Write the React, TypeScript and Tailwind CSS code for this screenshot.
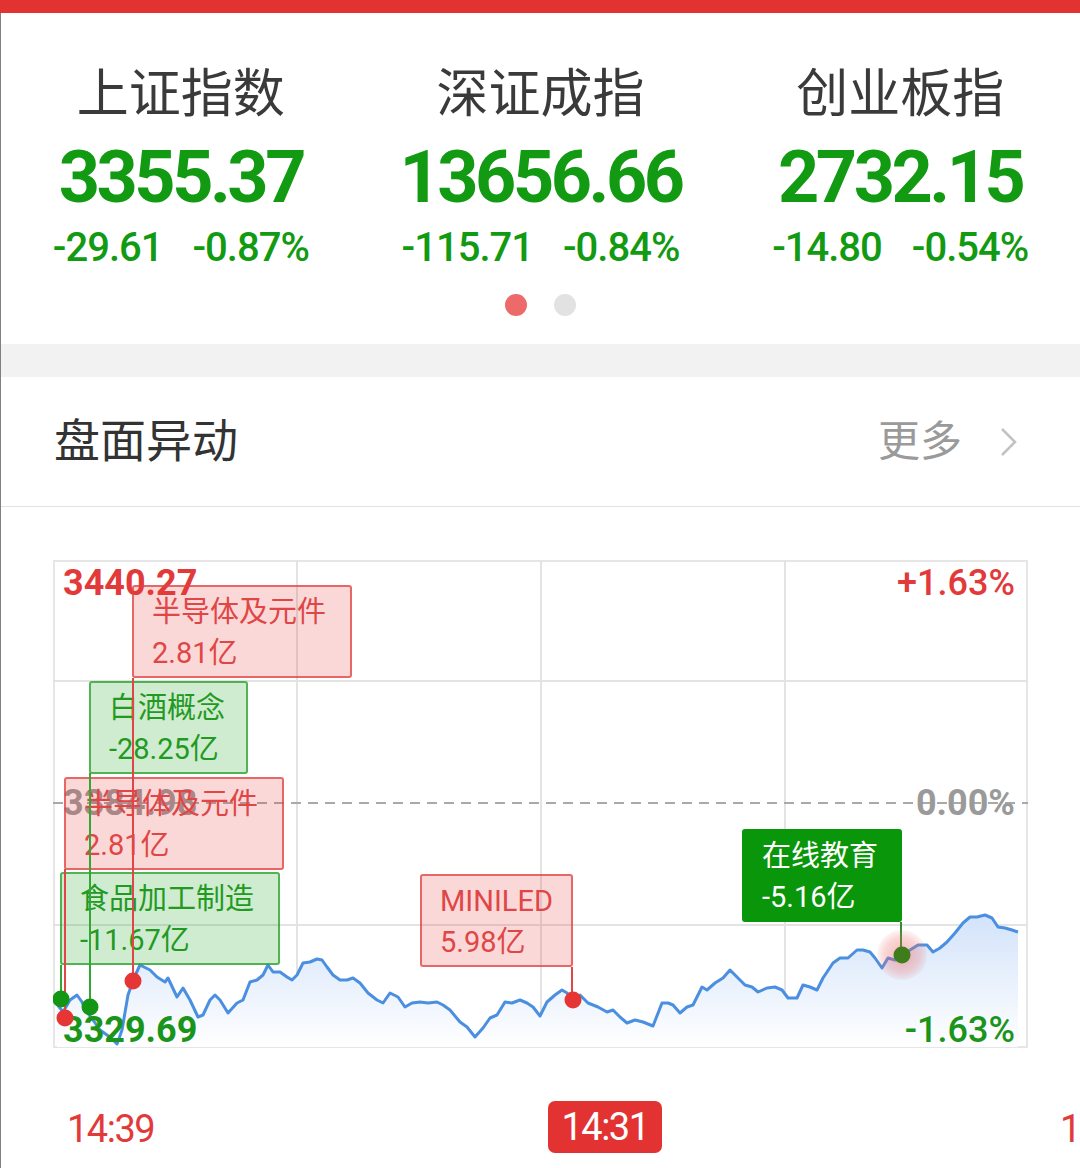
import React from "react";

const linePts: [number, number][] = [
  [57,1004],[63,1012],[70,1000],[77,995],[82,1002],[87,1012],[93,1020],[100,1030],[107,1035],[113,1040],[117,1044],[122,1030],[128,995],[134,978],[140,965],[150,970],[157,977],[165,982],[168,978],[177,997],[183,988],[190,1000],[198,1017],[203,1015],[210,1000],[215,995],[220,1000],[228,1013],[237,1003],[243,1000],[250,982],[257,980],[263,975],[268,965],[273,972],[280,972],[287,977],[292,980],[297,975],[303,963],[310,962],[317,959],[322,960],[327,967],[333,975],[340,980],[347,980],[353,978],[360,983],[368,993],[377,1000],[383,1003],[390,993],[398,997],[405,1007],[412,1003],[420,1002],[428,1003],[437,1002],[443,1005],[450,1010],[460,1022],[467,1027],[475,1037],[483,1028],[490,1018],[497,1015],[505,1002],[512,1003],[520,1000],[527,1003],[533,1007],[540,1016],[547,1002],[555,995],[562,990],[567,993],[573,1000],[580,995],[588,1003],[598,1007],[607,1012],[613,1010],[620,1017],[627,1023],[635,1020],[643,1022],[653,1026],[662,1003],[668,1003],[673,1005],[680,1013],[687,1007],[693,1005],[702,987],[707,990],[715,983],[723,978],[730,970],[737,977],[745,985],[752,987],[758,992],[767,988],[775,987],[782,990],[788,998],[797,998],[803,985],[810,987],[817,990],[823,978],[833,963],[840,958],[848,958],[857,950],[863,950],[870,952],[875,958],[882,968],[888,958],[895,960],[902,955],[910,950],[918,945],[927,945],[933,952],[940,948],[947,942],[955,933],[963,923],[970,917],[977,917],[985,915],[992,918],[998,927],[1005,928],[1012,930],[1018,932],
];

const lineStr = linePts.map((p) => p.join(",")).join(" ");
const fillStr = `${lineStr} 1018,1047 57,1047`;

function IndexCol({ name, value, chg, pct }: { name: string; value: string; chg: string; pct: string }) {
  return (
    <div className="flex flex-col items-center">
      <div className="h-[56px] leading-[56px] text-[52px] text-[#3a3a3a]">{name}</div>
      <div className="mt-[15px] h-[80px] leading-[80px] text-[72px] font-bold tracking-[-3.5px] text-[#129a12]">{value}</div>
      <div className="mt-[6px] h-[48px] leading-[48px] flex gap-[30px] text-[40px] font-medium tracking-[-1px] text-[#129a12]">
        <span>{chg}</span>
        <span>{pct}</span>
      </div>
    </div>
  );
}

function Box({
  left, top, w, title, amount, kind,
}: { left: number; top: number; w: number; title: string; amount: string; kind: "red" | "green" | "solid" }) {
  const cls =
    kind === "red"
      ? "bg-[rgba(232,60,60,0.2)] border-[rgba(224,64,64,0.75)] text-[#e04646]"
      : kind === "green"
      ? "bg-[rgba(40,170,40,0.22)] border-[rgba(40,160,40,0.75)] text-[#229a22]"
      : "bg-[#0a960a] border-[#0a960a] text-white";
  return (
    <div
      className={`absolute h-[93px] rounded-[3px] border-2 pl-[18px] pt-[5px] text-[29px] leading-[41px] whitespace-nowrap ${cls}`}
      style={{ left: left - 53, top: top - 560, width: w }}
    >
      <div>{title}</div>
      <div>{amount}</div>
    </div>
  );
}

export default function App() {
  return (
    <div className="w-[1080px] h-[1168px] overflow-hidden bg-white flex flex-col font-['Roboto','Noto_Sans_CJK_SC',sans-serif]">
      <div className="h-[13px] shrink-0 bg-[#e33232]" />
      <div className="flex-1 flex flex-col border-l border-[#808080]">
        {/* indices */}
        <div className="pt-[54px] pb-[28px]">
          <div className="grid grid-cols-3">
            <IndexCol name="上证指数" value="3355.37" chg="-29.61" pct="-0.87%" />
            <IndexCol name="深证成指" value="13656.66" chg="-115.71" pct="-0.84%" />
            <IndexCol name="创业板指" value="2732.15" chg="-14.80" pct="-0.54%" />
          </div>
          <div className="mt-[22px] flex justify-center gap-[27px]">
            <div className="w-[22px] h-[22px] rounded-full bg-[#ee6a6a]" />
            <div className="w-[22px] h-[22px] rounded-full bg-[#e2e2e2]" />
          </div>
        </div>
        <div className="h-[33px] shrink-0 bg-[#f2f2f2]" />

        {/* header */}
        <div className="h-[130px] shrink-0 flex items-center justify-between pl-[53px] pr-[62px] border-b border-[#e2e2e2]">
          <div className="text-[46px] text-[#333333]">盘面异动</div>
          <div className="flex items-center gap-[38px]">
            <span className="text-[42px] text-[#9a9a9a]">更多</span>
            <svg width="18" height="30" viewBox="0 0 18 30">
              <path d="M2 2 L15 15 L2 28" fill="none" stroke="#c2c2c2" strokeWidth="2.5" />
            </svg>
          </div>
        </div>

        {/* chart */}
        <div className="relative mt-[53px] ml-[52px] w-[975px] h-[488px] shrink-0">
          <svg className="absolute inset-0" width="975" height="488" viewBox="53 560 975 488">
            <defs>
              <linearGradient id="fillg" x1="0" y1="915" x2="0" y2="1048" gradientUnits="userSpaceOnUse">
                <stop offset="0" stopColor="#d3e3fa" />
                <stop offset="1" stopColor="#ffffff" />
              </linearGradient>
              <radialGradient id="halo">
                <stop offset="0" stopColor="rgba(236,90,90,0.45)" />
                <stop offset="0.7" stopColor="rgba(236,110,110,0.28)" />
                <stop offset="1" stopColor="rgba(236,120,120,0.08)" />
              </radialGradient>
            </defs>
            <rect x="54" y="561" width="973" height="486" fill="none" stroke="#e6e6e6" strokeWidth="2" />
            <line x1="297" y1="560" x2="297" y2="1048" stroke="#e3e3e3" strokeWidth="2" />
            <line x1="541" y1="560" x2="541" y2="1048" stroke="#e3e3e3" strokeWidth="2" />
            <line x1="785" y1="560" x2="785" y2="1048" stroke="#e3e3e3" strokeWidth="2" />
            <line x1="53" y1="681" x2="1028" y2="681" stroke="#e3e3e3" strokeWidth="2" />
            <line x1="53" y1="925" x2="1028" y2="925" stroke="#e3e3e3" strokeWidth="2" />
            <polygon points={fillStr} fill="url(#fillg)" />
            <line x1="53" y1="803" x2="1028" y2="803" stroke="#a9a9a9" strokeWidth="2" strokeDasharray="10 7" />
            <polyline points={lineStr} fill="none" stroke="#4a8fe0" strokeWidth="3" strokeLinejoin="round" />
          </svg>

          {/* axis labels */}
          <div className="absolute left-[10px] top-[3px] h-[40px] leading-[40px] text-[36px] font-bold text-[#e23a3a]">3440.27</div>
          <div className="absolute right-[13px] top-[3px] h-[40px] leading-[40px] text-[36px] font-medium text-[#e23a3a]">+1.63%</div>
          <div className="absolute left-[10px] top-[223px] h-[40px] leading-[40px] text-[36px] font-bold text-[#9a9a9a]">3384.98</div>
          <div className="absolute right-[13px] top-[223px] h-[40px] leading-[40px] text-[36px] font-bold text-[#9a9a9a]">0.00%</div>
          <div className="absolute left-[10px] top-[450px] h-[40px] leading-[40px] text-[36px] font-bold text-[#1a951a]">3329.69</div>
          <div className="absolute right-[13px] top-[450px] h-[40px] leading-[40px] text-[36px] font-medium text-[#1a951a]">-1.63%</div>

          {/* annotation boxes */}
          <Box left={132} top={585} w={220} title="半导体及元件" amount="2.81亿" kind="red" />
          <Box left={89} top={681} w={159} title="白酒概念" amount="-28.25亿" kind="green" />
          <Box left={64} top={777} w={220} title="半导体及元件" amount="2.81亿" kind="red" />
          <Box left={60} top={872} w={220} title="食品加工制造" amount="-11.67亿" kind="green" />
          <Box left={420} top={874} w={153} title="MINILED" amount="5.98亿" kind="red" />
          <Box left={742} top={829} w={160} title="在线教育" amount="-5.16亿" kind="solid" />

          {/* connectors and dots */}
          <svg className="absolute inset-0 pointer-events-none" width="975" height="488" viewBox="53 560 975 488">
            <line x1="133" y1="678" x2="133" y2="981" stroke="#e04646" strokeWidth="2" />
            <line x1="90" y1="773" x2="90" y2="1007" stroke="#34a634" strokeWidth="2" />
            <line x1="65" y1="869" x2="65" y2="1018" stroke="#e04646" strokeWidth="2" />
            <line x1="61" y1="965" x2="61" y2="999" stroke="#34a634" strokeWidth="2" />
            <line x1="572" y1="967" x2="572" y2="1000" stroke="#e04646" strokeWidth="2" />
            <line x1="901" y1="922" x2="901" y2="955" stroke="#2d8f2d" strokeWidth="2" />
            <circle cx="902" cy="955" r="25" fill="url(#halo)" />
            <circle cx="61" cy="999" r="8.5" fill="#139613" />
            <circle cx="90" cy="1007" r="8.5" fill="#139613" />
            <circle cx="65" cy="1018" r="8.5" fill="#e63535" />
            <circle cx="133" cy="981" r="8.5" fill="#e63535" />
            <circle cx="573" cy="1000" r="8.5" fill="#e63535" />
            <circle cx="902" cy="955" r="8.5" fill="#3f7d1c" />
          </svg>
        </div>

        {/* time axis */}
        <div className="mt-[53px] h-[52px] shrink-0 flex items-center whitespace-nowrap">
          <div className="w-[547px] shrink-0 pl-[66px] pt-[4px] text-[38px] tracking-[-1.5px] text-[#e23a3a]">14:39</div>
          <div className="w-[114px] h-[52px] shrink-0 rounded-[7px] bg-[#e33232] flex items-center justify-center text-[38px] tracking-[-1.5px] text-white">14:31</div>
          <div className="shrink-0 pl-[398px] pt-[4px] text-[38px] tracking-[-1.5px] text-[#e23a3a]">14:23</div>
        </div>
      </div>
    </div>
  );
}
